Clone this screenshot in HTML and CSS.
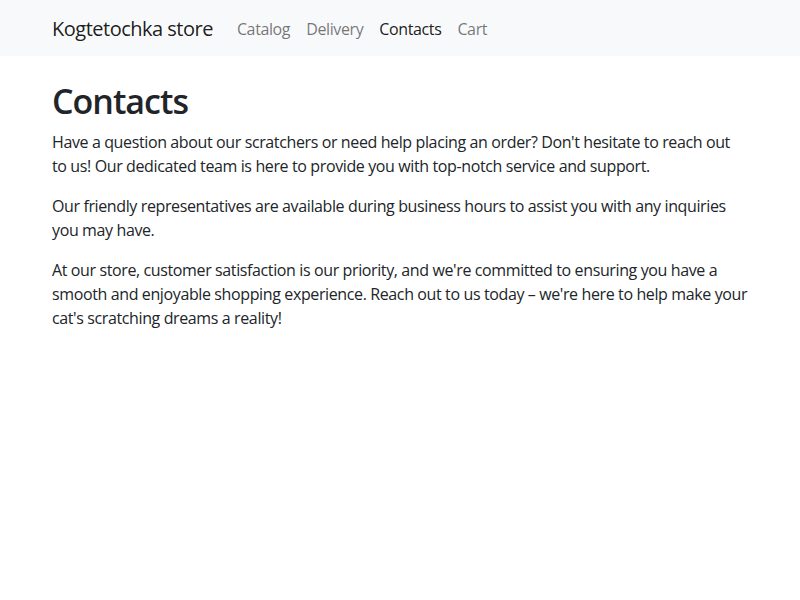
FILE: index.html
```html
<!DOCTYPE html>
<html lang="en">
<head>
<meta charset="utf-8">
<title>Contacts</title>
<link rel="stylesheet" href="styles.css">
</head>
<body>
<nav class="navbar">
  <div class="container nav-inner">
    <a class="brand" href="#">Kogtetochka store</a>
    <ul class="nav">
      <li><a class="nav-link" href="#">Catalog</a></li>
      <li><a class="nav-link" href="#">Delivery</a></li>
      <li><a class="nav-link active" href="#">Contacts</a></li>
      <li><a class="nav-link" href="#">Cart</a></li>
    </ul>
  </div>
</nav>
<main class="container main">
  <h1 class="title">Contacts</h1>
  <p>Have a question about our scratchers or need help placing an order? Don't hesitate to reach out to us! Our dedicated team is here to provide you with top-notch service and support.</p>
  <p>Our friendly representatives are available during business hours to assist you with any inquiries you may have.</p>
  <p>At our store, customer satisfaction is our priority, and we're committed to ensuring you have a smooth and enjoyable shopping experience. Reach out to us today – we're here to help make your cat's scratching dreams a reality!</p>
</main>
</body>
</html>
```
FILE: styles.css
```css
* { box-sizing: border-box; }
body {
  margin: 0;
  font-family: "Open Sans", "Noto Sans", sans-serif;
  font-size: 16px;
  line-height: 1.5;
  color: #212529;
  background: #fff;
  letter-spacing: -0.38px;
}
.container {
  width: 720px;
  margin: 0 auto;
  padding: 0 12px;
}
.navbar {
  background: #f8f9fa;
  padding: 8px 0;
}
.nav-inner {
  display: flex;
  align-items: center;
}
.brand {
  font-size: 20px;
  line-height: 30px;
  padding: 6px 0 4px;
  margin-right: 16px;
  color: rgba(0,0,0,.9);
  text-decoration: none;
  letter-spacing: -0.5px;
}
.nav {
  display: flex;
  list-style: none;
  margin: 0;
  padding: 0;
}
.nav-link {
  display: block;
  padding: 9px 8px 7px;
  color: rgba(0,0,0,.55);
  text-decoration: none;
}
.nav-link.active { color: rgba(0,0,0,.9); }
.main { margin-top: 25px; }
.title {
  font-size: 34px;
  font-weight: 600;
  line-height: 1.2;
  margin: 0 0 8px;
  letter-spacing: -1px;
}
p { margin: 0 0 16px; }
```
